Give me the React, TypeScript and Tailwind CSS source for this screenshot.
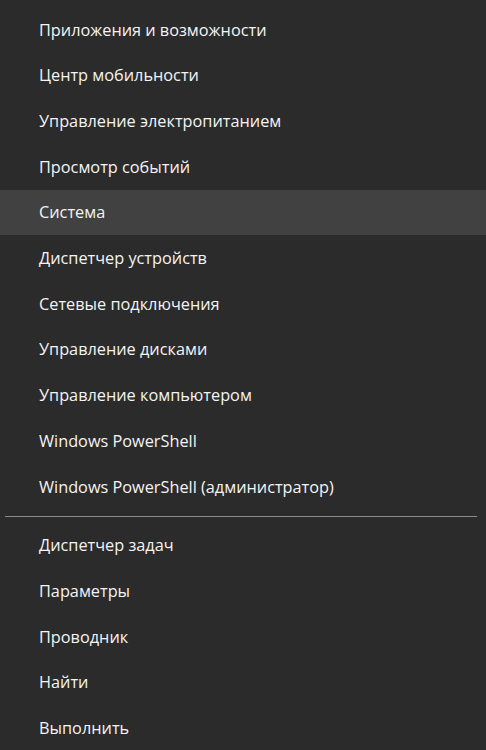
import React from "react";

const top = [
  "Приложения и возможности",
  "Центр мобильности",
  "Управление электропитанием",
  "Просмотр событий",
  "Система",
  "Диспетчер устройств",
  "Сетевые подключения",
  "Управление дисками",
  "Управление компьютером",
  "Windows PowerShell",
  "Windows PowerShell (администратор)",
];
const bottom = ["Диспетчер задач", "Параметры", "Проводник", "Найти", "Выполнить"];

function Row({ label, active }: { label: string; active?: boolean }) {
  return (
    <div
      className={
        "h-[45.7px] flex items-center pl-[39px] text-[16.3px] text-[#f4f4f4] " +
        (active ? "bg-[#414141]" : "")
      }
    >
      {label}
    </div>
  );
}

export default function App() {
  return (
    <div
      className="w-[486px] h-[750px] bg-[#2b2b2b] overflow-hidden pt-[7px]"
      style={{ fontFamily: '"Open Sans", "Noto Sans", sans-serif' }}
    >
      {top.map((t) => (
        <Row key={t} label={t} active={t === "Система"} />
      ))}
      <div className="py-[6px] pl-[5px] pr-[9px]">
        <div className="h-px bg-[#8a8a8a]" />
      </div>
      {bottom.map((t) => (
        <Row key={t} label={t} />
      ))}
    </div>
  );
}
